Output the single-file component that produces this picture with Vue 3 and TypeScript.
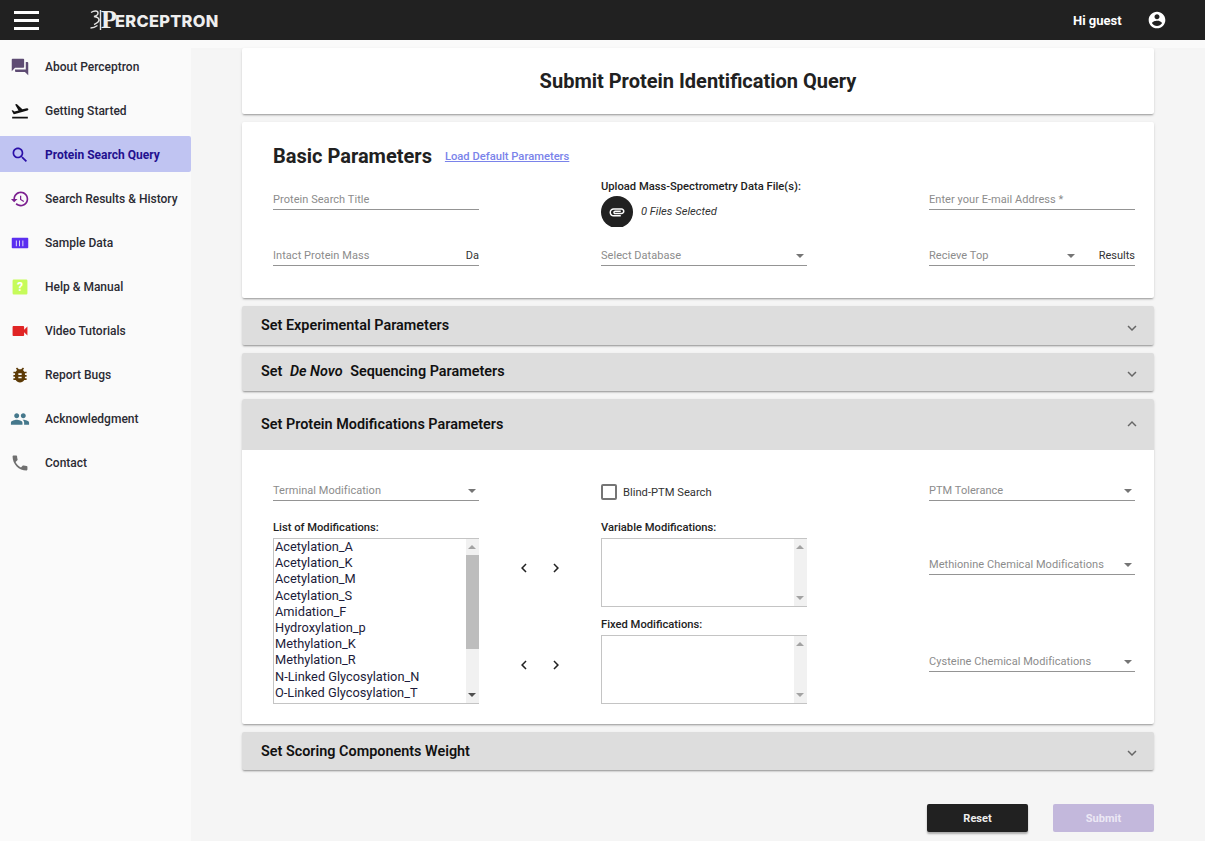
<script setup lang="ts">
const navItems = [
  { label: 'About Perceptron', color: '#5e4b73', d: 'M21 6h-2v9H6v2c0 .55.45 1 1 1h11l4 4V7c0-.55-.45-1-1-1zm-4 6V3c0-.55-.45-1-1-1H3c-.55 0-1 .45-1 1v14l4-4h10c.55 0 1-.45 1-1z' },
  { label: 'Getting Started', color: '#111111', d: 'M2.5 19h19v2h-19zm19.57-9.36c-.21-.8-1.04-1.28-1.84-1.06L14.92 10l-6.9-6.43-1.93.51 4.14 7.17-4.97 1.33-1.97-1.54-1.45.39 1.82 3.16.77 1.33 1.6-.43 5.31-1.42 4.35-1.16L21 11.49c.81-.23 1.28-1.05 1.07-1.85z' },
  { label: 'Protein Search Query', color: '#2a0fa8', active: true, d: 'M15.5 14h-.79l-.28-.27C15.41 12.59 16 11.11 16 9.5 16 5.91 13.09 3 9.5 3S3 5.91 3 9.5 5.91 16 9.5 16c1.61 0 3.09-.59 4.23-1.57l.27.28v.79l5 4.99L20.49 19l-4.99-5zm-6 0C7.01 14 5 11.99 5 9.5S7.01 5 9.5 5 14 7.01 14 9.5 11.99 14 9.5 14z' },
  { label: 'Search Results & History', color: '#7b1f8f', d: 'M13 3c-4.97 0-9 4.03-9 9H1l3.89 3.89.07.14L9 12H6c0-3.87 3.13-7 7-7s7 3.13 7 7-3.13 7-7 7c-1.93 0-3.68-.79-4.94-2.06l-1.42 1.42C8.27 19.99 10.51 21 13 21c4.97 0 9-4.03 9-9s-4.03-9-9-9zm-1 5v5l4.28 2.54.72-1.21-3.5-2.08V8H12z' },
  { label: 'Sample Data', color: '#5b2ff0', d: 'M3 5.500h18a1 1 0 0 1 1 1v11a1 1 0 0 1-1 1H3a1 1 0 0 1-1-1v-11a1 1 0 0 1 1-1zM7 9v7h1V9H7zm4 0v7h1V9h-1zm4 0v7h1V9h-1z' },
  { label: 'Help & Manual', color: '#c6fb5a', d: 'M4.500 3h15A1.500 1.500 0 0 1 21 4.500v15a1.500 1.500 0 0 1-1.500 1.500h-15A1.500 1.500 0 0 1 3 19.500v-15A1.500 1.500 0 0 1 4.500 3z', mark: true },
  { label: 'Video Tutorials', color: '#e02424', d: 'M17 10.5V7c0-.55-.45-1-1-1H4c-.55 0-1 .45-1 1v10c0 .55.45 1 1 1h12c.55 0 1-.45 1-1v-3.500l4 4v-11l-4 4z' },
  { label: 'Report Bugs', color: '#5c3a06', d: 'M20 8h-2.810c-.45-.78-1.070-1.450-1.820-1.960L17 4.410 15.590 3l-2.170 2.170C12.960 5.060 12.490 5 12 5c-.49 0-.96.06-1.410.17L8.410 3 7 4.410l1.620 1.630C7.880 6.550 7.260 7.220 6.810 8H4v2h2.090c-.05.33-.09.66-.09 1v1H4v2h2v1c0 .34.04.67.09 1H4v2h2.810c1.040 1.790 2.970 3 5.190 3s4.150-1.210 5.190-3H20v-2h-2.090c.05-.33.09-.66.09-1v-1h2v-2h-2v-1c0-.34-.04-.67-.09-1H20V8zm-6 8h-4v-2h4v2zm0-4h-4v-2h4v2z' },
  { label: 'Acknowledgment', color: '#45788c', d: 'M16 11c1.660 0 2.990-1.340 2.990-3S17.660 5 16 5c-1.660 0-3 1.340-3 3s1.340 3 3 3zm-8 0c1.660 0 2.990-1.340 2.990-3S9.660 5 8 5C6.340 5 5 6.340 5 8s1.340 3 3 3zm0 2c-2.330 0-7 1.170-7 3.500V19h14v-2.500c0-2.330-4.670-3.500-7-3.500zm8 0c-.29 0-.62.02-.97.05 1.160.84 1.970 1.970 1.970 3.450V19h6v-2.500c0-2.330-4.670-3.500-7-3.500z' },
  { label: 'Contact', color: '#6f6f6f', d: 'M6.620 10.790c1.440 2.830 3.760 5.140 6.590 6.590l2.200-2.200c.27-.27.67-.36 1.020-.24 1.120.37 2.330.57 3.570.57.55 0 1 .45 1 1V20c0 .55-.45 1-1 1-9.390 0-17-7.610-17-17 0-.55.45-1 1-1h3.500c.55 0 1 .45 1 1 0 1.250.2 2.450.57 3.570.11.35.03.74-.25 1.020l-2.200 2.200z' },
]

const modifications = [
  'Acetylation_A', 'Acetylation_K', 'Acetylation_M', 'Acetylation_S', 'Amidation_F',
  'Hydroxylation_p', 'Methylation_K', 'Methylation_R', 'N-Linked Glycosylation_N', 'O-Linked Glycosylation_T',
]

const chevronDown = 'M16.590 8.590L12 13.170 7.410 8.590 6 10l6 6 6-6z'
const chevronUp = 'M12 8l-6 6 1.410 1.410L12 10.830l4.590 4.580L18 14z'
const chevronLeft = 'M15.410 7.410L14 6l-6 6 6 6 1.410-1.410L10.830 12z'
const chevronRight = 'M10 6L8.590 7.410 13.170 12l-4.580 4.590L10 18l6-6z'
</script>

<template>
  <div class="page">
    <header class="topbar">
      <div class="burger"><span></span><span></span><span></span></div>
      <div class="logo">
        <svg class="logo-mark" viewBox="0 0 12 22">
          <path d="M1 3.500c3-2 7-2 7 .5 0 2-2 3-4 3.500 3 .5 5 1.500 5 3.500 0 2.500-3 3.500-5 4.500M.5 19c3 0 5-1 7-2.500M10.500 1v20" />
        </svg>
        <span class="logo-p">P</span><span class="logo-rest">ERCEPTRON</span>
      </div>
      <span class="greeting">Hi guest</span>
      <svg class="account" viewBox="0 0 24 24"><path d="M12 2C6.480 2 2 6.480 2 12s4.480 10 10 10 10-4.480 10-10S17.520 2 12 2zm0 3c1.660 0 3 1.340 3 3s-1.340 3-3 3-3-1.340-3-3 1.340-3 3-3zm0 14.200c-2.500 0-4.710-1.280-6-3.220.03-1.990 4-3.080 6-3.080 1.990 0 5.970 1.090 6 3.080-1.290 1.940-3.500 3.220-6 3.220z" /></svg>
    </header>

    <div class="body">
      <nav class="sidebar">
        <a v-for="item in navItems" :key="item.label" class="nav-item" :class="{ active: item.active }">
          <span class="nav-icon">
            <svg viewBox="0 0 24 24" :style="{ fill: item.color }"><path :d="item.d" /></svg>
            <span v-if="item.mark" class="help-mark">?</span>
          </span>
          <span>{{ item.label }}</span>
        </a>
      </nav>

      <main class="main">
        <section class="card title-card">
          <h1>Submit Protein Identification Query</h1>
        </section>

        <section class="card basic-card">
          <div class="basic-head">
            <h2>Basic Parameters</h2>
            <a class="load-link">Load Default Parameters</a>
          </div>
          <div class="three-col basic-row-one">
            <div class="field"><span class="ph">Protein Search Title</span></div>
            <div class="upload">
              <div class="upload-label">Upload Mass-Spectrometry Data File(s):</div>
              <div class="upload-row">
                <span class="clip-clip">
                  <span class="clip-btn">
                    <svg viewBox="0 0 24 24"><path d="M2 12.500C2 9.460 4.460 7 7.500 7H18c2.210 0 4 1.790 4 4s-1.790 4-4 4H9.500C8.120 15 7 13.880 7 12.500S8.120 10 9.500 10H17v2H9.410c-.55 0-.55 1 0 1H18c1.100 0 2-.9 2-2s-.9-2-2-2H7.500C5.570 9 4 10.570 4 12.500S5.570 16 7.500 16H17v2H7.500C4.460 18 2 15.540 2 12.500z" /></svg>
                  </span>
                </span>
                <em>0 Files Selected</em>
              </div>
            </div>
            <div class="field"><span class="ph">Enter your E-mail Address *</span></div>
          </div>
          <div class="three-col">
            <div class="field"><span class="ph">Intact Protein Mass</span><span class="unit">Da</span></div>
            <div class="field"><span class="ph">Select Database</span><i class="caret"></i></div>
            <div class="field">
              <span class="ph">Recieve Top</span>
              <i class="caret receive-caret"></i>
              <span class="results">Results</span>
            </div>
          </div>
        </section>

        <section class="panel panel-tall">
          <span>Set Experimental Parameters</span>
          <svg viewBox="0 0 24 24"><path :d="chevronDown" /></svg>
        </section>

        <section class="panel">
          <span>Set <em class="denovo">De Novo</em> Sequencing Parameters</span>
          <svg viewBox="0 0 24 24"><path :d="chevronDown" /></svg>
        </section>

        <section class="card mods-card">
          <div class="panel panel-open">
            <span>Set Protein Modifications Parameters</span>
            <svg viewBox="0 0 24 24"><path :d="chevronUp" /></svg>
          </div>
          <div class="mods">
            <div class="mods-col">
              <div class="field"><span class="ph">Terminal Modification</span><i class="caret"></i></div>
              <div class="box-label list-label">List of Modifications:</div>
              <div class="listbox list-main">
                <div class="list-items">
                  <div v-for="m in modifications" :key="m">{{ m }}</div>
                </div>
                <div class="scrollbar">
                  <i class="sb-up"></i>
                  <div class="sb-track"><div class="sb-thumb"></div></div>
                  <i class="sb-down dark"></i>
                </div>
              </div>
            </div>

            <div class="arrows-col">
              <div class="arrows">
                <svg viewBox="0 0 24 24"><path :d="chevronLeft" /></svg>
                <svg viewBox="0 0 24 24"><path :d="chevronRight" /></svg>
              </div>
              <div class="arrows">
                <svg viewBox="0 0 24 24"><path :d="chevronLeft" /></svg>
                <svg viewBox="0 0 24 24"><path :d="chevronRight" /></svg>
              </div>
            </div>

            <div class="mods-col">
              <label class="blind">
                <span class="checkbox"></span>
                <span>Blind-PTM Search</span>
              </label>
              <div class="box-label var-label">Variable Modifications:</div>
              <div class="listbox list-small">
                <div class="list-items"></div>
                <div class="scrollbar"><i class="sb-up"></i><div class="sb-track"></div><i class="sb-down"></i></div>
              </div>
              <div class="box-label fixed-label">Fixed Modifications:</div>
              <div class="listbox list-small">
                <div class="list-items"></div>
                <div class="scrollbar"><i class="sb-up"></i><div class="sb-track"></div><i class="sb-down"></i></div>
              </div>
            </div>

            <div class="mods-col right-col">
              <div class="field"><span class="ph">PTM Tolerance</span><i class="caret"></i></div>
              <div class="field meth"><span class="ph">Methionine Chemical Modifications</span><i class="caret"></i></div>
              <div class="field cyst"><span class="ph">Cysteine Chemical Modifications</span><i class="caret"></i></div>
            </div>
          </div>
        </section>

        <section class="panel panel-last">
          <span>Set Scoring Components Weight</span>
          <svg viewBox="0 0 24 24"><path :d="chevronDown" /></svg>
        </section>

        <div class="actions">
          <button class="btn reset">Reset</button>
          <button class="btn submit">Submit</button>
        </div>
      </main>
    </div>
  </div>
</template>

<style>
html, body {
  margin: 0;
  background: #f5f5f5;
}
</style>

<style scoped>
.page {
  height: 841px;
  overflow: hidden;
  font-family: Roboto, "Liberation Sans", sans-serif;
  color: #212121;
}

.topbar {
  display: flex;
  align-items: center;
  height: 40px;
  background: #212121;
  color: #fff;
}

.burger {
  display: flex;
  flex-direction: column;
  gap: 5px;
  width: 25px;
  margin-left: 14px;
}

.burger span {
  height: 3px;
  background: #fff;
}

.logo {
  display: flex;
  align-items: center;
  margin-left: 51px;
  width: 984px;
  color: #eee;
}

.logo-mark {
  width: 12px;
  height: 22px;
  fill: none;
  stroke: #e4e4e4;
  stroke-width: 1.400;
}

.logo-p {
  font: bold 26px "Liberation Serif", serif;
  line-height: 30px;
  width: 13px;
  margin-left: -1px;
  text-align: right;
}

.logo-rest {
  font: 800 16.400px Inter, "Open Sans", sans-serif;
  letter-spacing: 0.300px;
  margin-left: 1px;
  margin-top: 1px;
}

.greeting {
  font-size: 13px;
  font-weight: 700;
  width: 74px;
  margin-left: -1px;
}

.account {
  width: 20px;
  height: 20px;
  fill: #fff;
  margin-top: -1px;
}

.body {
  display: flex;
  height: 801px;
}

.sidebar {
  flex: none;
  width: 191px;
  padding-top: 9px;
  box-sizing: border-box;
  background: #fafafa;
}

.nav-item {
  display: flex;
  align-items: center;
  gap: 16px;
  height: 36px;
  margin-bottom: 8px;
  padding-left: 11px;
  box-sizing: border-box;
  font-size: 12px;
  font-weight: 500;
  color: #2b2b33;
  border-radius: 0 2px 2px 0;
}

.nav-item.active {
  margin-top: -1px;
  margin-bottom: 9px;
  padding-top: 1px;
  background: #c0c4f2;
  color: #23108f;
  font-weight: 700;
}

.nav-icon {
  position: relative;
  width: 18px;
  height: 18px;
  flex: none;
}

.nav-icon svg {
  display: block;
  width: 100%;
  height: 100%;
  transform: scale(1.1);
}

.help-mark {
  position: absolute;
  inset: 0;
  color: #fff;
  font-size: 12px;
  font-weight: 700;
  line-height: 18px;
  text-align: center;
}

.main {
  flex: 1;
  min-width: 0;
  padding: 8px 51px 0;
  background: linear-gradient(#fafafa 8px, #f5f5f5 8px);
}

.card {
  background: #fff;
  border-radius: 2px;
  box-shadow: 0 2px 2px -1px rgba(0, 0, 0, 0.3), 0 1px 3px rgba(0, 0, 0, 0.12);
  margin-bottom: 8px;
}

.title-card {
  height: 66px;
  display: flex;
  align-items: center;
  justify-content: center;
}

.title-card h1 {
  margin: 0 0 1px;
  font-size: 20px;
  font-weight: 700;
}

.basic-card {
  height: 176px;
  box-sizing: border-box;
  padding: 24px 19px 0 31px;
}

.basic-head {
  display: flex;
  align-items: center;
  gap: 13px;
  height: 20px;
}

.basic-head h2 {
  margin: 0;
  font-size: 20px;
  font-weight: 700;
}

.load-link {
  font-size: 11.200px;
  font-weight: 500;
  color: #7a83ea;
  text-decoration: underline;
  margin-top: 1px;
}

.three-col {
  display: grid;
  grid-template-columns: 206px 206px 206px;
  column-gap: 122px;
}

.basic-row-one {
  height: 62px;
  margin-top: 14px;
}

.field {
  position: relative;
  display: flex;
  align-items: center;
  justify-content: space-between;
  height: 24px;
  padding-top: 4px;
  box-sizing: border-box;
  border-bottom: 1px solid #949494;
  font-size: 11px;
}

.basic-row-one > .field {
  margin-top: 6px;
}

.ph {
  color: #8c8c8c;
  letter-spacing: 0.050px;
}

.unit, .results {
  font-size: 11px;
  color: #333;
}

.caret {
  width: 0;
  height: 0;
  margin-right: 3px;
  border-left: 4.500px solid transparent;
  border-right: 4.500px solid transparent;
  border-top: 4.500px solid #757575;
}

.receive-caret {
  margin: 0 24px 0 auto;
}

.upload-label, .box-label {
  font-size: 11.200px;
  font-weight: 500;
  color: #222;
}

.upload-label {
  line-height: 13px;
}

.upload-row {
  display: flex;
  align-items: center;
  gap: 8px;
  margin-top: 3px;
}

.upload-row em {
  font-size: 11.200px;
  color: #333;
}

.clip-clip {
  display: block;
  height: 31px;
  overflow: hidden;
}

.clip-btn {
  display: flex;
  align-items: center;
  justify-content: center;
  width: 32px;
  height: 32px;
  border-radius: 50%;
  background: #212121;
}

.clip-btn svg {
  width: 18px;
  height: 18px;
  fill: #fff;
}

.panel {
  display: flex;
  align-items: center;
  justify-content: space-between;
  height: 38px;
  margin-bottom: 8px;
  padding: 0 13px 2px 19px;
  box-sizing: border-box;
  background: #ddd;
  border-radius: 2px;
  box-shadow: 0 2px 2px -1px rgba(0, 0, 0, 0.35), 0 1px 3px rgba(0, 0, 0, 0.1);
  font-size: 14.400px;
  font-weight: 600;
  color: #111;
}

.panel svg {
  width: 18px;
  height: 18px;
  margin-top: 6px;
  fill: #666;
}

.panel-tall {
  height: 39px;
  padding-bottom: 0;
}

.panel-tall svg {
  margin-top: 4px;
}

.panel-last {
  padding-bottom: 0;
}

.panel-last svg {
  margin-top: 4px;
}

.denovo {
  margin: 0 4px;
}

.panel-open {
  height: 51px;
  margin: 0;
  padding-bottom: 0;
  box-shadow: none;
  border-radius: 2px 2px 0 0;
}

.panel-open svg {
  margin: 0 0 2px;
}

.mods-card {
  height: 325px;
}

.mods {
  display: flex;
  padding: 27px 19px 0 31px;
}

.mods-col {
  width: 206px;
  flex: none;
}

.arrows-col {
  width: 122px;
  flex: none;
  padding-top: 82px;
  box-sizing: border-box;
}

.arrows {
  display: flex;
  justify-content: center;
  gap: 14px;
  margin-bottom: 79px;
  padding-right: 1px;
}

.arrows svg {
  width: 18px;
  height: 18px;
  fill: #222;
}

.right-col {
  margin-left: 122px;
}

.meth {
  margin-top: 50px;
}

.cyst {
  margin-top: 73px;
}

.list-label {
  margin-top: 20px;
  line-height: 13px;
}

.listbox {
  display: flex;
  margin-top: 4px;
  box-sizing: border-box;
  border: 1px solid #c4c4c4;
  border-right: 0;
  background: #fff;
}

.list-main {
  height: 166px;
}

.list-small {
  height: 69px;
}

.list-items {
  flex: 1;
  padding-left: 1px;
  font-size: 12.800px;
  line-height: 16.200px;
  color: #1c1c3a;
}

.scrollbar {
  display: flex;
  flex-direction: column;
  width: 13px;
  background: #f1f1f1;
}

.sb-up, .sb-down {
  flex: none;
  height: 16px;
  position: relative;
}

.sb-up::after, .sb-down::after {
  content: "";
  position: absolute;
  left: 2px;
  top: 6px;
  border-left: 4px solid transparent;
  border-right: 4px solid transparent;
}

.sb-up::after {
  border-bottom: 4px solid #a3a3a3;
}

.sb-down::after {
  border-top: 4px solid #a3a3a3;
}

.sb-down.dark::after {
  border-top-color: #505050;
}

.sb-track {
  flex: 1;
}

.sb-thumb {
  height: 94px;
  background: #bdbdbd;
}

.blind {
  display: flex;
  align-items: center;
  gap: 6px;
  height: 24px;
  margin-top: 3px;
  font-size: 11.200px;
  color: #333;
}

.checkbox {
  width: 12px;
  height: 12px;
  border: 2px solid #757575;
  border-radius: 2px;
}

.var-label {
  margin-top: 17px;
  line-height: 13px;
}

.fixed-label {
  margin-top: 11px;
  line-height: 13px;
}

.actions {
  display: flex;
  justify-content: flex-end;
  gap: 25px;
  margin-top: 34px;
}

.btn {
  width: 101px;
  height: 28px;
  padding: 0;
  border: 0;
  border-radius: 2px;
  font-family: inherit;
  font-size: 11px;
  font-weight: 700;
}

.reset {
  background: #212121;
  color: #eee;
  box-shadow: 0 2px 2px rgba(0, 0, 0, 0.3);
}

.submit {
  background: #c3b8dc;
  color: #ece8f5;
}
</style>
